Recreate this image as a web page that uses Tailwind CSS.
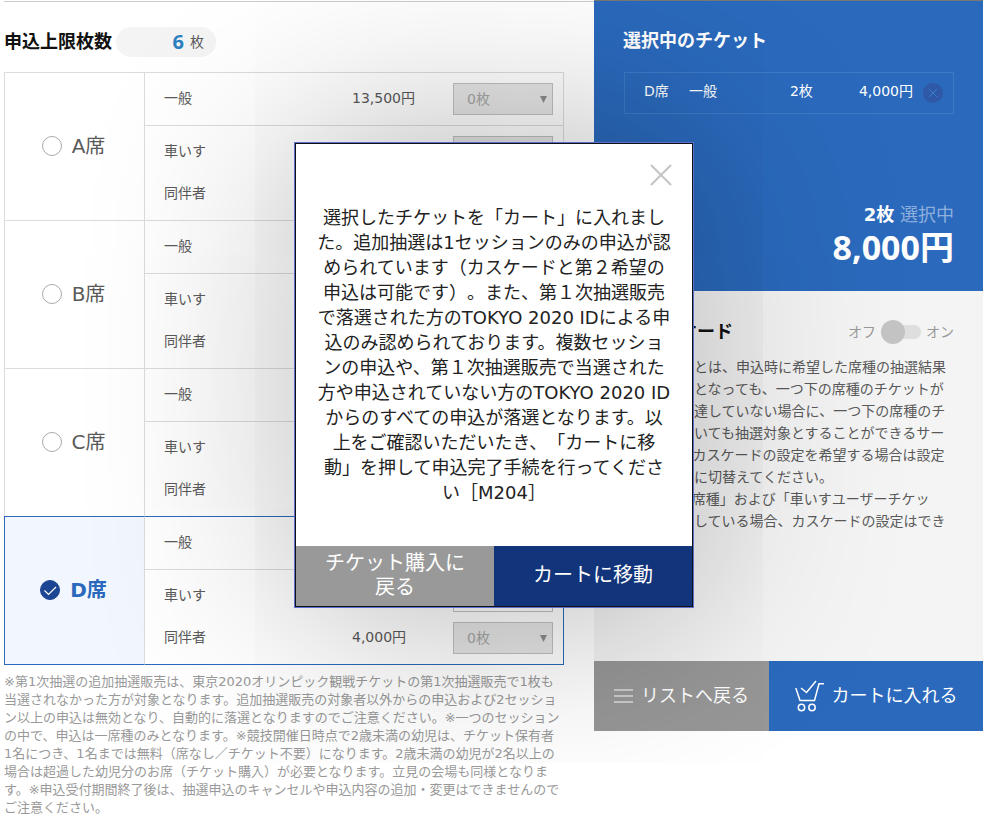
<!DOCTYPE html>
<html lang="ja">
<head>
    <meta charset="UTF-8">
    <meta name="viewport" content="width=device-width, initial-scale=1.0">
    <title>チケット申込</title>
    <script src="https://cdn.jsdelivr.net/npm/@tailwindcss/browser@4"></script>
    <script>
        document.addEventListener('DOMContentLoaded', function() {
            const tableBody = document.getElementById('seat-table-body');

            // prices per type: 一般, 車いす, 同伴者
            const seats = [
                { name: 'A席', prices: ['13,500円', '', ''] },
                { name: 'B席', prices: ['', '', ''] },
                { name: 'C席', prices: ['', '', ''] },
                { name: 'D席', prices: ['', '', '4,000円'], selected: true }
            ];
            const types = ['一般', '車いす', '同伴者'];

            seats.forEach((seat, s) => {
                const line = seat.selected ? 'border-[#2a69bc]' : 'border-[#dcdcdc]';
                const check = `<svg class="pointer-events-none absolute left-0 size-5" viewBox="0 0 20 20" fill="none" stroke="#fff" stroke-width="1.2"><path d="M4.500 10.500l4 4L16 7"/></svg>`;

                types.forEach((type, t) => {
                    const row = document.createElement('tr');
                    const pad = ['py-2.5 h-[53px]', 'pt-2.5 pb-[5px] h-12', 'pt-[5px] pb-2.5 h-[47px]'][t];
                    const textPad = ['pt-2 pb-2.5', 'pt-2 pb-[5px]', 'pt-[3px] pb-2.5'][t];
                    const top = t === 0 ? 'border-t ' + line : t === 1 ? 'border-t border-t-[#dcdcdc]' : '';
                    const bottom = seat.selected && t === 2 ? 'border-b border-b-[#2a69bc]' : '';
                    const right = seat.selected ? 'border-r border-r-[#2a69bc]' : 'border-r border-r-[#dcdcdc]';
                    const count = '0枚';
                    const box = seat.selected && t < 2 ? 'bg-white text-[#555]' : 'bg-[#e6e6e6] text-[#a5a5a5]';

                    row.innerHTML = `
                        ${t === 0 ? `
                        <th rowspan="3" class="border-t border-l pr-0.5 pb-0.5 ${line} ${seat.selected ? 'border-b bg-[#f1f6ff]' : ''}">
                            <label class="flex items-center justify-center gap-2.5 text-xl leading-6 ${seat.selected ? 'font-bold text-[#2a69bc]' : 'font-normal text-[#5a5a5a]'}">
                                <span class="relative flex items-center">
                                    <input type="radio" name="seat" class="size-5 appearance-none rounded-full border ${seat.selected ? 'border-[#1c4594] bg-[#1c4594]' : 'border-[#aaa] bg-white'}" ${seat.selected ? 'checked' : ''}>
                                    ${seat.selected ? check : ''}
                                </span>
                                ${seat.name}
                            </label>
                        </th>` : ''}
                        <td class="border-l border-l-[#dcdcdc] pl-[19px] ${textPad} ${top} ${bottom}"><label for="count-${s}-${t}">${type}</label></td>
                        <td class="whitespace-nowrap ${textPad} ${top} ${bottom}">${seat.prices[t]}</td>
                        <td class="pr-2.5 pl-[39px] ${pad} ${top} ${right} ${bottom}">
                            <div class="relative">
                                <select id="count-${s}-${t}" class="block h-8 w-full appearance-none border border-[#c0c0c0] pl-[13px] ${box}"><option>${count}</option></select>
                                <svg class="pointer-events-none absolute top-3 right-1.5 h-2 w-[7px]" viewBox="0 0 7 8"><path d="M0 1h7L3.500 8z" fill="#8c8c8c"/></svg>
                            </div>
                        </td>
                    `;
                    tableBody.appendChild(row);
                });
            });
        });
    </script>
</head>
<body class="bg-white font-['DejaVu_Sans','Noto_Sans_CJK_JP',sans-serif] text-sm text-[#5a5a5a] [text-spacing-trim:space-all]">
    <div class="relative flex items-start overflow-hidden pb-1">
        <main class="min-w-0 flex-1 pt-px pl-1">
            <div class="border-t border-[#ccc] pt-[25px] pr-[30px]">
                <div class="flex h-[30px] items-center gap-1">
                    <h1 class="text-lg font-bold text-[#111]">申込上限枚数</h1>
                    <p class="flex h-[30px] w-[100px] items-center justify-end gap-1.5 rounded-full bg-[#f4f4f4] pr-3">
                        <b class="font-['Noto_Sans'] text-xl text-[#2a80c0]">6</b>枚
                    </p>
                </div>

                <table class="mt-[15px] w-full table-fixed border-separate border-spacing-0">
                    <colgroup>
                        <col class="w-[140px]">
                        <col>
                        <col class="w-[62px]">
                        <col class="w-[150px]">
                    </colgroup>
                    <tbody id="seat-table-body"></tbody>
                </table>

                <p class="mt-2 text-[13px] leading-[18px] whitespace-nowrap text-[#999]">
                    ※第1次抽選の追加抽選販売は、東京2020オリンピック観戦チケットの第1次抽選販売で1枚も<br>当選されなかった方が対象となります。追加抽選販売の対象者以外からの申込および2セッショ<br>ン以上の申込は無効となり、自動的に落選となりますのでご注意ください。※一つのセッション<br>の中で、申込は一席種のみとなります。※競技開催日時点で2歳未満の幼児は、チケット保有者<br>1名につき、1名までは無料（席なし／チケット不要）になります。2歳未満の幼児が2名以上の<br>場合は超過した幼児分のお席（チケット購入）が必要となります。立見の会場も同様となりま<br>す。※申込受付期間終了後は、抽選申込のキャンセルや申込内容の追加・変更はできませんので<br>ご注意ください。
                </p>
            </div>
        </main>

        <aside class="w-[389px] shrink-0 border-t border-[#777]">
            <section class="flex h-[290px] flex-col bg-[#2a69bc] px-[29px] pt-[26px] pb-[26px] text-white">
                <h2 class="text-lg font-bold">選択中のチケット</h2>
                <div class="mt-[17px] ml-px flex h-[42px] items-center border border-[#3d79c5] pr-2.5 pb-1 pl-[19px]">
                    <span class="w-[45px]">D席</span>
                    <span class="flex-1">一般</span>
                    <span class="w-[69px]">2枚</span>
                    <span>4,000円</span>
                    <button type="button" aria-label="削除" class="mt-1 ml-2.5">
                        <svg class="size-5" viewBox="0 0 20 20"><circle cx="10" cy="10" r="10" fill="#2f58a6"/><path d="M6 6l8 8M14 6l-8 8" stroke="#3a7fcc"/></svg>
                    </button>
                </div>
                <p class="mt-auto text-right text-lg leading-7 text-[#8fb0dc]"><b class="text-white">2枚</b> 選択中</p>
                <p class="text-right font-['Noto_Sans','Noto_Sans_CJK_JP',sans-serif] text-[34px] leading-9 font-bold">8,000円</p>
            </section>

            <section class="h-[370px] bg-[#f4f4f4] px-[29px] pt-[27px]">
                <div class="flex h-7 items-center">
                    <h2 class="flex-1 pl-5 text-lg font-bold text-[#111]">カスケード</h2>
                    <label class="flex items-center gap-[5px] text-[#999]">オフ
                        <span class="relative flex h-6 w-10 items-center">
                            <input type="checkbox" class="h-3.5 w-full appearance-none rounded-full bg-[#dedede]">
                            <span class="pointer-events-none absolute left-0 size-6 rounded-full bg-[#c4c4c4]"></span>
                        </span>
                    オン</label>
                </div>
                <p class="mt-2.5 ml-px leading-[22px] whitespace-nowrap">
                    カスケードとは、申込時に希望した席種の抽選結果<br>が「落選」となっても、一つ下の席種のチケットが<br>上限枚数に達していない場合に、一つ下の席種のチ<br>ケットについても抽選対象とすることができるサー<br>ビスです。カスケードの設定を希望する場合は設定<br>を「オン」に切替えてください。<br>※「最下位席種」および「車いすユーザーチケッ<br>ト」を選択している場合、カスケードの設定はでき<br>ません。
                </p>
            </section>

            <div class="flex h-[70px] text-lg text-white">
                <button type="button" class="flex w-[175px] items-center justify-center gap-2 bg-[#979797]">
                    <svg class="h-3.5 w-[19px]" viewBox="0 0 19 14" stroke="#fff" stroke-width="1.2"><path d="M0 1h19M0 7h19M0 13h19"/></svg>
                    リストへ戻る
                </button>
                <button type="button" class="flex flex-1 items-center justify-center gap-2 bg-[#2a69bc]">
                    <svg class="h-8 w-[29px]" viewBox="0 0 29 32" fill="none" stroke="#fff" stroke-width="1.5"><path d="M.8 8l4.200 12.500h14.500L24 3.800h5M6 8l5.500 4.500L21 1"/><circle cx="6.500" cy="27.500" r="3.200"/><circle cx="17" cy="27.500" r="3.200"/></svg>
                    カートに入れる
                </button>
            </div>
        </aside>

        <!-- cart confirmation dialog -->
        <div class="absolute inset-x-0 top-[142px] flex justify-center pl-[5px]">
            <div role="dialog" aria-label="カート確認" class="relative w-[400px] border border-[#5b6fd0] shadow-[0_0_200px_rgba(0,0,0,0.32)]">
                <div class="border border-[#111] bg-white">
                    <button type="button" aria-label="閉じる" class="absolute top-[21px] right-[21px]">
                        <svg class="size-[22px]" viewBox="0 0 22 22" stroke="#c4c4c4" stroke-width="2"><path d="M1 1l20 20M21 1L1 21"/></svg>
                    </button>
                    <p class="pt-[61px] pb-[41px] text-center text-lg leading-[25px] whitespace-nowrap text-[#222]">
                        選択したチケットを「カート」に入れまし<br>た。追加抽選は1セッションのみの申込が認<br>められています（カスケードと第２希望の<br>申込は可能です）。また、第１次抽選販売<br>で落選された方のTOKYO 2020 IDによる申<br>込のみ認められております。複数セッショ<br>ンの申込や、第１次抽選販売で当選された<br>方や申込されていない方のTOKYO 2020 ID<br>からのすべての申込が落選となります。以<br>上をご確認いただいたき、「カートに移<br>動」を押して申込完了手続を行ってくださ<br>い［M204］
                    </p>
                    <div class="grid h-[60px] grid-cols-2 text-xl leading-6 text-white">
                        <button type="button" class="bg-[#999] pb-0.5">チケット購入に<br>戻る</button>
                        <button type="button" class="bg-[#11347a] pb-0.5">カートに移動</button>
                    </div>
                </div>
            </div>
        </div>
    </div>
</body>
</html>
